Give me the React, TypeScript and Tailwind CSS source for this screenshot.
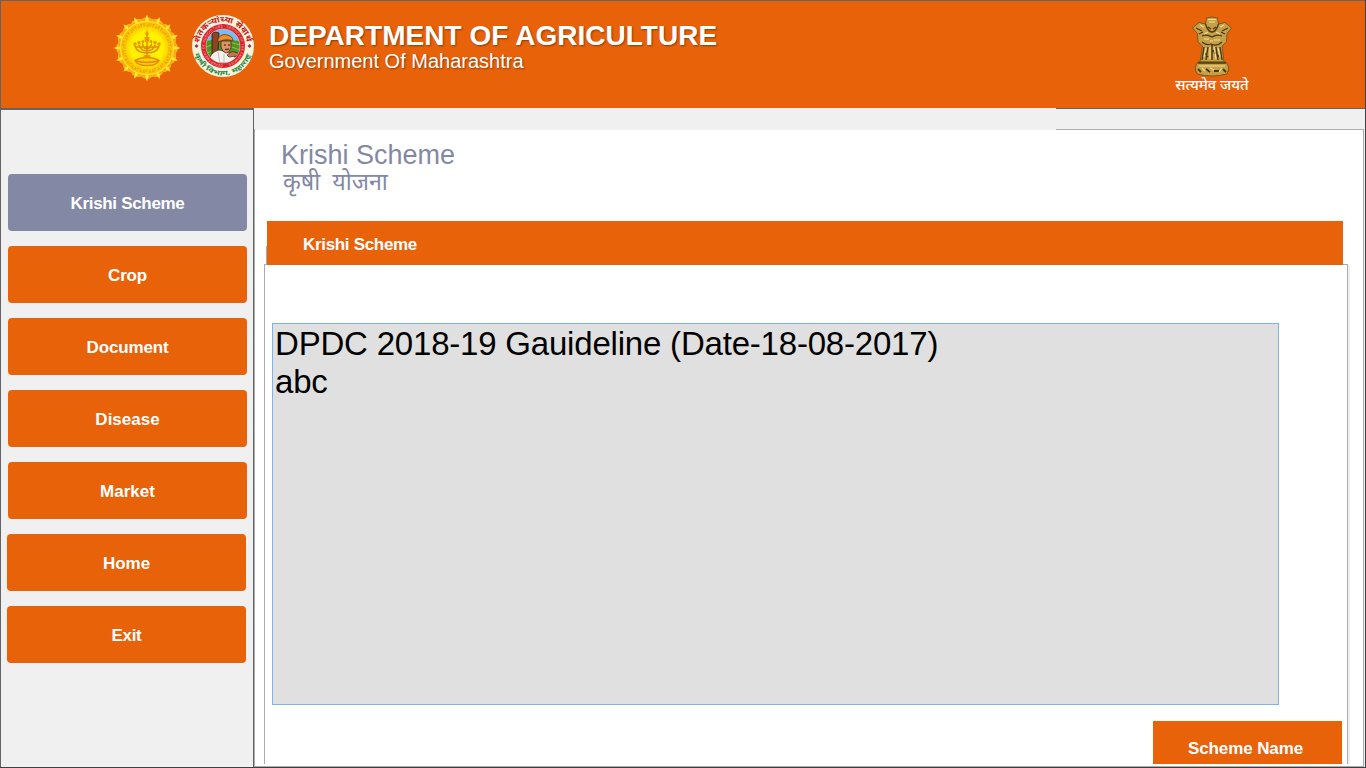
const items = [
  { label: 'Krishi Scheme', cls: 'ml-[7px] bg-[#8388a5] tracking-[-0.32px]' },
  { label: 'Crop', cls: 'ml-[7px] bg-[#e8620a] tracking-[-0.2px]' },
  { label: 'Document', cls: 'ml-[7px] bg-[#e8620a] tracking-[-0.15px]' },
  { label: 'Disease', cls: 'ml-[7px] bg-[#e8620a]' },
  { label: 'Market', cls: 'ml-[7px] bg-[#e8620a]' },
  { label: 'Home', cls: 'ml-[6px] bg-[#e8620a]' },
  { label: 'Exit', cls: 'ml-[6px] bg-[#e8620a] tracking-[-0.3px]' },
];

const ticks = Array.from({ length: 48 }, (_, i) => i * 7.5);

function SunSeal() {
  return (
    <svg width="68" height="68" viewBox="-34 -34 68 68" className="shrink-0">
      <defs>
        <radialGradient id="sun">
          <stop offset="0" stopColor="#fff500" />
          <stop offset=".6" stopColor="#fff000" />
          <stop offset=".75" stopColor="#ffd400" />
          <stop offset="1" stopColor="#ffb80c" />
        </radialGradient>
      </defs>
      <g fill="#ffb01c">
        {Array.from({ length: 16 }, (_, i) => (
          <path key={i} transform={`rotate(${i * 22.5})`} d="M-6-27Q-4-31-1.5-30.5L0-33.5L1.5-30.5Q4-31 6-27Z" />
        ))}
      </g>
      <circle r="29.5" fill="#fca91a" />
      <g fill="#fff02a">
        {Array.from({ length: 16 }, (_, i) => (
          <path key={i} d="M-1.8-28.5L0-32.5L1.8-28.5L0-26.5Z" transform={`rotate(${i * 22.5})`} />
        ))}
      </g>
      <circle r="27" fill="url(#sun)" />
      <circle r="26.6" fill="none" stroke="#ffe920" strokeWidth="1.1" />
      <g stroke="#dfa000" strokeWidth="1.1" opacity=".75" fill="none">
        {ticks.map((a) => (
          <path key={a} transform={`rotate(${a})`} d={a % 22.5 ? 'M-1-24.2H1.4M.2-24V-21.5' : 'M-1-22H1V-24'} />
        ))}
      </g>
      <g fill="none" stroke="#e48c00" strokeWidth="1.5" strokeLinecap="round">
        <path d="M0-14V11M-2-10H2M-12-2Q-10 5 0 5T12-2M-8-3Q-6 3 0 3T8-3M-4.5-4Q-3 1 0 1T4.5-4M-11-1H11M-3 8H3" />
        <path d="M-12 12.5Q-7 9.5 0 9.5T12 12.5Q10 17.5 0 17.5T-12 12.5Z" fill="#ffd000" />
        <path d="M-11 13Q0 16 11 13" />
      </g>
      <g fill="#ec9800">
        <path d="M0-18L2-14L0-12L-2-14Z" />
        <circle cy="-8" r="2.4" />
        <circle cx="-12" cy="-4" r="1.8" />
        <circle cx="12" cy="-4" r="1.8" />
        <circle cx="-8" cy="-5.5" r="1.7" />
        <circle cx="8" cy="-5.5" r="1.7" />
        <circle cx="-4" cy="-6.5" r="1.5" />
        <circle cx="4" cy="-6.5" r="1.5" />
      </g>
    </svg>
  );
}

function FarmerSeal() {
  return (
    <svg width="64" height="64" viewBox="-32 -32 64 64" className="shrink-0">
      <defs>
        <path id="arcTop" d="M-23.8-3A24 24 0 0 1 23.8-3" />
        <path id="arcLow" d="M-28.6 5A29 29 0 0 0 28.6 5" />
        <path id="arcRing" d="M0 18.4A18.4 18.4 0 1 1 .1 18.4" />
        <clipPath id="disc"><circle r="17" /></clipPath>
      </defs>
      <circle r="31" fill="#f8f3d9" />
      <circle r="22" fill="#d8202c" />
      <g clipPath="url(#disc)">
        <rect x="-17" y="-17" width="34" height="34" fill="#79bdf0" />
        <path d="M-17-5L-3-7L17-5V17H-17Z" fill="#4f9426" />
        <path d="M-17 1L-4-4M-17 8L-5 1M6 0L17 4M6-4L17-1" stroke="#8fc23c" strokeWidth="1" />
        <path d="M-11-13L-8-14L-4-13L-5 8L-11 8Z" fill="#8c4524" stroke="#32180e" strokeWidth=".8" />
        <path d="M-15 17Q-13 6-4 4L5 6Q12 8 15 17Z" fill="#f5f1ed" stroke="#333" strokeWidth=".7" />
        <path d="M-2-5H8L8 2Q6 7 3 7Q-1 6-2 1Z" fill="#df9468" stroke="#42230f" strokeWidth=".8" />
        <path d="M-5-4Q-6-10 1-11.5Q10-11 10-5Q3-8-5-4Z" fill="#f58b25" stroke="#693410" strokeWidth=".8" />
        <path d="M1-1H3M5-1H7M2 3.5L6 3" stroke="#291712" />
        <path d="M4 9L9 5.5L15 7L14 10L6 11Z" fill="#c8774a" stroke="#432417" strokeWidth=".7" />
        <path d="M-5 6L-3 17M1 8V17" stroke="#999" strokeWidth=".6" />
      </g>
      <circle r="17" fill="none" stroke="#f2d4c2" strokeWidth=".5" />
      <text fontSize="3.6" fill="#ffb9aa" fontFamily="Liberation Sans, sans-serif">
        <textPath href="#arcRing" textLength="112">DEPARTMENT OF AGRICULTURE · SERVICE OF THE FARMERS ·</textPath>
      </text>
      <text fontSize="8" fontWeight="700" fill="#c31922" fontFamily="Noto Sans Devanagari, sans-serif">
        <textPath href="#arcTop" startOffset="0" textLength="68" lengthAdjust="spacingAndGlyphs">शेतकऱ्यांच्या सेवार्थ</textPath>
      </text>
      <text fontSize="6.5" fontWeight="700" fill="#27894f" fontFamily="Noto Sans Devanagari, sans-serif">
        <textPath href="#arcLow" startOffset="3" textLength="74" lengthAdjust="spacingAndGlyphs">कृषी विभाग, महाराष्ट्र</textPath>
      </text>
      <path d="M-26.5-2L-24.5 0L-26.5 2L-28.5 0ZM26.5-2L28.5 0L26.5 2L24.5 0Z" fill="#8a3264" />
    </svg>
  );
}

function Emblem() {
  return (
    <svg width="42" height="61" viewBox="0 0 42 61" className="shrink-0">
      <g fill="#c4a149" stroke="#6a4b13" strokeWidth=".8">
        <path d="M15.5 2L21 1L26.5 2L27.5 8L34 6.5L40.5 12L36 17.5L35.5 26L31 30L33 46H9L11.5 30L7 26L6.5 17.5L1.5 12L8 6.5L14.5 8Z" />
        <path d="M7 46H35Q40 52 35.5 58Q21 62 6.5 58Q2 52 7 46Z" />
      </g>
      <g fill="none" stroke="#4a3512" strokeWidth="1.3">
        <path d="M14.5 8Q17 16 21 16T27.5 8M17 11L20 13M25 11L22 13M5 12L11 15M37 12L31 15M8 18L12 16M34 18L30 16M11 20Q16 18 21 21Q26 18 31 20M11 26Q16 30 20 28Q26 31 31 26" />
        <path d="M13 31L11 44M17 31L15 44M21 29V44M25 31L27 44M29 31L31 44M14 37L17 41M25 36L28 41M22 34L24 38M7 47H35" strokeWidth="1.4" />
        <path d="M7 53L10 56M15 53L19 56M23 55H28M32 53L35 56" strokeWidth="1.8" />
      </g>
      <path d="M17 3.5H25M18 6H24M9 9L13 11M33 9L29 11M13 18L17 16M25 16L29 18M13 23H18M23 24H29M19 25H22M15 32L13 41M19 31V43M23 31L25 43M27 32L29 41M8 50H34M11 52L14 55M28 56L31 52M19 52L23 54" stroke="#f3dc8e" strokeWidth="1.2" fill="none" />
    </svg>
  );
}

export default function App() {
  return (
    <div className="flex h-[768px] w-[1366px] overflow-hidden bg-[#3f4043] font-['Liberation_Sans',sans-serif]">
      <div className="flex h-[767px] w-[1365px] flex-col border-l border-t border-[#646464] bg-[#f0f0f0]">
        <header className="flex h-[107px] shrink-0 bg-[#e8620a]">
          <div className="ml-[112px] mt-[13px]"><SunSeal /></div>
          <div className="ml-[10px] mt-[13px]"><FarmerSeal /></div>
          <div className="ml-[14px] mt-[19px] text-white [text-shadow:1px_1px_2px_#0006]">
            <h1 className="h-[30px] whitespace-nowrap text-[28px] font-bold leading-[32px] tracking-[0.03px]">DEPARTMENT OF AGRICULTURE</h1>
            <p className="whitespace-nowrap text-[20px] leading-[23px]">Government Of Maharashtra</p>
          </div>
          <div className="ml-auto mr-[113px] mt-[15px] flex w-[80px] flex-col items-center">
            <Emblem />
            <p className="mt-[2px] whitespace-nowrap font-['Noto_Sans_Devanagari',sans-serif] text-[14.8px] font-medium leading-[16px] text-white">सत्यमेव जयते</p>
          </div>
        </header>
        <div className="flex h-[659px]">
          <nav className="flex w-[253px] shrink-0 flex-col gap-[15px] border-r border-t-2 border-[#646464] pt-[64px]">
            {items.map((item) => (
              <button key={item.label} className={`h-[57px] w-[239px] shrink-0 rounded-[4px] pt-[2px] text-[17px] font-bold text-white ${item.cls}`}>
                {item.label}
              </button>
            ))}
          </nav>
          <div className="flex w-[1111px] flex-col">
            <div className="flex h-[21px] shrink-0">
              <div className="w-[802px]" />
              <div className="grow border-t border-[#646464]" />
            </div>
            <main className="flex h-[638px] w-[1110px] flex-col border-b border-l border-r border-[#acacac] bg-white">
              <div className="flex h-px shrink-0">
                <div className="w-[801px] bg-[#f0f0f0]" />
                <div className="grow bg-[#acacac]" />
              </div>
              <div className="ml-[26px] h-[91px] shrink-0 pt-[10px] text-[#8388a5]">
                <h2 className="text-[27px] leading-[30px]">Krishi Scheme</h2>
                <p className="ml-[2px] mt-[-2px] font-['Noto_Sans_Devanagari',sans-serif] text-[23.2px] leading-[32px]">कृषी&nbsp; योजना</p>
              </div>
              <div className="flex h-[44px] shrink-0">
                <div className="ml-[9px] flex w-[3px] flex-col items-end">
                  <div className="mt-[25px] w-px grow bg-[#acacac]" />
                  <div className="h-px w-[3px] bg-[#acacac]" />
                </div>
                <div className="flex w-[1076px] items-center bg-[#e8620a] pl-[36px] pt-[4px] text-[17px] font-bold tracking-[-0.32px] text-white">Krishi Scheme</div>
                <div className="h-px w-[5px] self-end bg-[#acacac]" />
              </div>
              <section className="ml-[9px] h-[499px] w-[1084px] border-l border-r border-[#acacac] pl-[7px] shadow-[2px_0_0_#f0f0f0]">
                <ul className="mt-[58px] h-[382px] w-[1007px] border border-[#7eb4ea] bg-[#e0e0e0] pl-[2px] pt-px text-[33px] leading-[38px] tracking-[-0.2px]">
                  <li>DPDC 2018-19 Gauideline (Date-18-08-2017)</li>
                  <li>abc</li>
                </ul>
                <button className="ml-[881px] mt-[16px] h-[43px] w-[189px] bg-[#e8620a] pr-[4px] pt-[12px] text-[17px] font-bold tracking-[-0.1px] text-white">Scheme Name</button>
              </section>
            </main>
          </div>
        </div>
      </div>
    </div>
  );
}
